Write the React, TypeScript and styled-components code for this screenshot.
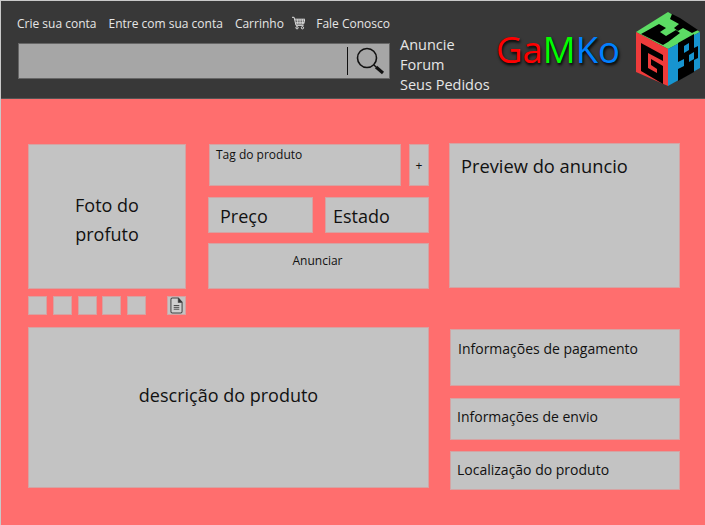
import React from "react";
import styled, { createGlobalStyle } from "styled-components";

const Global = createGlobalStyle`
  html, body { margin: 0; padding: 0; width: 705px; height: 525px; overflow: hidden; background: #ff6e6e; }
  * { box-sizing: border-box; }
  body { font-family: "Open Sans", "Liberation Sans", sans-serif; }
`;
const Page = styled.div`
  width: 705px; height: 525px; display: flex; flex-direction: column;
  background: #ff6e6e; border-left: 1px solid #c9c9c9; border-top: 1px solid #c9c9c9;
`;
const Header = styled.header`
  height: 98px; flex: none; background: #383838; display: flex; border-bottom: 1px solid #555;
`;
const HeaderLeft = styled.div`
  width: 389px; flex: none; padding: 12px 0 0 16px; display: flex; flex-direction: column; gap: 10px;
`;
const TopLinks = styled.nav`
  display: flex; align-items: center; height: 20px; color: #e6e6e6; font-size: 12px;
`;
const TopLink = styled.span<{ $gap: number }>`
  margin-right: ${(p) => p.$gap}px; white-space: nowrap;
`;
const SearchBar = styled.div`
  margin-left: 1px; height: 36px; width: 372px; background: #a6a6a6; border: 1px solid #666;
  display: flex; justify-content: flex-end; align-items: center; padding-right: 5px; gap: 8px;
`;
const Divider = styled.div`width: 1px; height: 28px; background: #111;`;
const SideLinks = styled.nav`
  width: 96px; flex: none; margin-left: 10px; padding-top: 34px; display: flex; flex-direction: column;
  color: #e6e6e6; font-size: 14.5px; line-height: 20px;
`;
const Logo = styled.div`
  width: 140px; flex: none; padding: 26px 0 0 0; font-size: 36.500px; line-height: 44px; white-space: nowrap;
  text-shadow: 1px 2px 3px #000;
`;
const Tint = styled.span<{ $c: string }>`color: ${(p) => p.$c};`;
const CubeWrap = styled.div`margin-top: 11px; flex: none;`;

const Main = styled.main`
  flex: 1; padding: 45px 25px 0 27px; display: flex; gap: 20px;
`;
const LeftCol = styled.div`width: 401px; flex: none; display: flex; flex-direction: column; gap: 12px;`;
const TopRow = styled.div`display: flex; gap: 22px;`;
const PhotoCol = styled.div`width: 158px; flex: none; display: flex; flex-direction: column; gap: 7px;`;
const Box = styled.div`
  background: #c3c3c3; border: 1px solid #d5a3a3; color: #111;
`;
const Photo = styled(Box)`
  height: 145px; padding-top: 6px; display: flex; align-items: center; justify-content: center; text-align: center;
  font-size: 18px; line-height: 29px;
`;
const Thumbs = styled.div`display: flex; align-items: center;`;
const Thumb = styled(Box)`width: 19px; height: 19px; margin-right: 5.800px; flex: none;`;
const DocThumb = styled(Thumb)`
  margin: 0 0 0 15px; display: flex; align-items: center; justify-content: center;
`;
const FormCol = styled.div`width: 221px; flex: none; display: flex; flex-direction: column;`;
const TagRow = styled.div`display: flex; justify-content: space-between; padding-left: 1px; margin-bottom: 11px;`;
const TagBox = styled(Box)`
  width: 192px; height: 42px; padding: 2px 6px; font-size: 12px; line-height: 15px;
`;
const PlusBox = styled(Box)`
  width: 20px; height: 42px; display: flex; align-items: center; justify-content: center; font-size: 12px;
`;
const PriceRow = styled.div`display: flex; justify-content: space-between; margin-bottom: 10px;`;
const PriceBox = styled(Box)<{ $w: number; $pad: number; $top: number }>`
  width: ${(p) => p.$w}px; height: 36px; padding-left: ${(p) => p.$pad}px; padding-top: ${(p) => p.$top}px; font-size: 18px;
  display: flex; align-items: center;
`;
const Submit = styled(Box)`
  height: 46px; padding: 9px 2px 0 0; text-align: center; font-size: 12px; line-height: 16px;
`;
const Description = styled(Box)`
  height: 161px; padding-bottom: 26px; display: flex; align-items: center; justify-content: center; font-size: 18px;
`;
const RightCol = styled.div`width: 232px; flex: none; display: flex; flex-direction: column; margin-top: -1px;`;
const Preview = styled(Box)`
  width: 231px; height: 145px; padding: 8px 11px; font-size: 18.300px; line-height: 28px; margin-bottom: 41px; white-space: nowrap;
`;
const InfoBox = styled(Box)<{ $h: number; $mb: number; $pad: number; $bottom: number }>`
  width: 230px; height: ${(p) => p.$h}px; margin-bottom: ${(p) => p.$mb}px; margin-left: 1px;
  display: flex; align-items: center; padding-left: ${(p) => p.$pad}px; padding-bottom: ${(p) => p.$bottom}px; font-size: 14px;
`;

const CartIcon = () => (
  <svg width="14" height="14" viewBox="0 0 14 14" fill="none" stroke="#e6e6e6" strokeWidth="1" style={{ marginRight: 11 }}>
    <path d="M0 1h2.200l2 8.500h8" />
    <path d="M3 3h10.500l-1.200 5H4.200" />
    <path d="M3.400 4.700h9.600M3.900 6.400h9M6 3v5M8.500 3v5M11 3v5" strokeWidth="0.8" />
    <circle cx="5.300" cy="12" r="1.200" /><circle cx="11" cy="12" r="1.200" />
  </svg>
);
const SearchIcon = () => (
  <svg width="28" height="28" viewBox="0 0 28 28" fill="none" stroke="#111">
    <circle cx="11" cy="11" r="9.500" strokeWidth="1.600" />
    <path d="M18 18l2 2" strokeWidth="1.400" />
    <path d="M20 20l7 6" strokeWidth="3.200" />
  </svg>
);
const DocIcon = () => (
  <svg width="13" height="17" viewBox="0 0 14 18" fill="#cfcfcf" stroke="#444" strokeWidth="1.100">
    <path d="M1 2.500Q1 1 2.500 1H9l4 4.500v10Q13 17 11.500 17h-9Q1 17 1 15.500Z" />
    <path d="M9 1v4.500h4" fill="#333" />
    <path d="M4 9h6M4 11h6M4 13h6" strokeWidth="1" />
  </svg>
);
const Cube = () => (
  <svg width="64" height="74" viewBox="636 12 64 74">
    <polygon points="636,32 668,12 700,32 668,49" fill="#5cdc64" />
    <polygon points="636,32 668,49 668,86 636,72" fill="#ee3b3b" />
    <polygon points="668,49 700,32 700,68 668,86" fill="#1794d0" />
    <polygon fill="#000" points="641,34 659,24 666,28 660,32 666,36 676,30 680,33 668,42 663,45" />
    <polygon fill="#000" points="672,14 680,18 698,30 692,33 683,28 678,31 674,28 679,24 670,19" />
    <polygon fill="#000" points="641,43 663,55 663,61 648,53 648,68 657,73 657,69 651,65 651,59 663,66 663,84 641,71" />
    <polygon fill="#000" points="678,43 694,34 694,72 678,81" />
    <polygon fill="#000" points="694,48 698,46 698,58 694,60" />
    <polygon fill="#1794d0" points="684,46 689,43 689,50 684,53" />
    <polygon fill="#1794d0" points="678,62 684,59 684,66 678,69" />
    <polygon fill="#1794d0" points="689,55 694,52 694,59 689,62" />
  </svg>
);

export default function App() {
  return (
    <Page>
      <Global />
      <Header>
        <HeaderLeft>
          <TopLinks>
            <TopLink $gap={12}>Crie sua conta</TopLink>
            <TopLink $gap={12}>Entre com sua conta</TopLink>
            <TopLink $gap={8}>Carrinho</TopLink>
            <CartIcon />
            <TopLink $gap={0}>Fale Conosco</TopLink>
          </TopLinks>
          <SearchBar>
            <Divider />
            <SearchIcon />
          </SearchBar>
        </HeaderLeft>
        <SideLinks>
          <span>Anuncie</span>
          <span>Forum</span>
          <span>Seus Pedidos</span>
        </SideLinks>
        <Logo>
          <Tint $c="#ff0000">Ga</Tint>
          <Tint $c="#00ff00">M</Tint>
          <Tint $c="#0080ff">Ko</Tint>
        </Logo>
        <CubeWrap><Cube /></CubeWrap>
      </Header>
      <Main>
        <LeftCol>
          <TopRow>
            <PhotoCol>
              <Photo>Foto do<br />profuto</Photo>
              <Thumbs>
                <Thumb /><Thumb /><Thumb /><Thumb /><Thumb />
                <DocThumb><DocIcon /></DocThumb>
              </Thumbs>
            </PhotoCol>
            <FormCol>
              <TagRow>
                <TagBox>Tag do produto</TagBox>
                <PlusBox>+</PlusBox>
              </TagRow>
              <PriceRow>
                <PriceBox $w={105} $pad={11} $top={2}>Preço</PriceBox>
                <PriceBox $w={104} $pad={7} $top={1}>Estado</PriceBox>
              </PriceRow>
              <Submit>Anunciar</Submit>
            </FormCol>
          </TopRow>
          <Description>descrição do produto</Description>
        </LeftCol>
        <RightCol>
          <Preview>Preview do anuncio</Preview>
          <InfoBox $h={57} $mb={12} $pad={7} $bottom={18}>Informações de pagamento</InfoBox>
          <InfoBox $h={42} $mb={11} $pad={6} $bottom={5}>Informações de envio</InfoBox>
          <InfoBox $h={39} $mb={0} $pad={6} $bottom={2}>Localização do produto</InfoBox>
        </RightCol>
      </Main>
    </Page>
  );
}
